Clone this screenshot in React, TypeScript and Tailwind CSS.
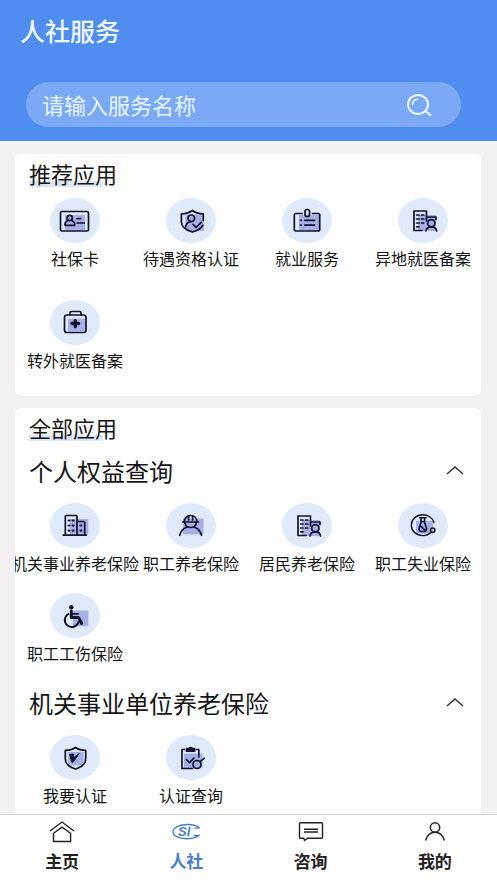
import { useState } from 'react'
import type { ReactNode } from 'react'

type Service = { label: string; icon: ReactNode }

/* Service icons: 50x45 badge with a lilac patch behind the line art */
function Badge({ patch, children }: { patch: number[]; children: ReactNode }) {
  const [x, y, width, height] = patch
  return (
    <svg
      viewBox="0 0 50 45"
      className="h-[45px] w-[50px] shrink-0"
      fill="none"
      stroke="#10132a"
      strokeWidth={1.7}
      strokeLinecap="round"
      strokeLinejoin="round"
      aria-hidden="true"
    >
      <ellipse cx="25" cy="22.5" rx="25" ry="22.5" fill="#dfeafb" stroke="none" />
      <rect x={x} y={y} width={width} height={height} fill="#a5afe8" stroke="none" />
      {children}
    </svg>
  )
}

function CardIcon() {
  return (
    <Badge patch={[15, 17, 20, 15]}>
      <rect x="10.5" y="13.5" width="28" height="19.5" rx="1.5" />
      <circle cx="19.7" cy="20" r="2.6" />
      <path d="M17.8 22.3 15 25v2.3h9.6V25l-2.8-2.7M27 20.7h3.6M27 25h7.4" />
    </Badge>
  )
}

function ShieldUserIcon() {
  return (
    <Badge patch={[19.5, 16.5, 18.5, 16.5]}>
      <path d="M37.3 22.5v-6.6c-4.8-.1-8.4-1.4-10.9-3.4-2.5 2-6.2 3.3-11 3.4V24c0 4.8 4.2 8 11 10 5.2-1.5 8.8-3.7 10.3-6.7" />
      <circle cx="25.3" cy="20.3" r="3.3" />
      <path d="M19.6 28.8c.6-3 2.3-4.7 4.7-5.1M27 26.3l3.2 3 5-5" />
    </Badge>
  )
}

function WorkBadgeIcon() {
  return (
    <Badge patch={[17, 17, 20, 16]}>
      <path d="M20 15.5h-6.2a1.5 1.5 0 0 0-1.5 1.5v14.5a1.5 1.5 0 0 0 1.5 1.5h22.4a1.5 1.5 0 0 0 1.5-1.5V17a1.5 1.5 0 0 0-1.5-1.5H30.5" />
      <rect x="23" y="11.5" width="4.5" height="7" rx="2" />
      <path d="M18.5 22.3h.8M22.8 22.3h9.7M18.5 27.2h.8M22.8 27.2h9.7" />
    </Badge>
  )
}

function OfficeUserIcon() {
  return (
    <Badge patch={[20, 17, 18, 16]}>
      <path d="M24 32.5h-8V13h12.5v10M28.5 19h9.5v2.5" />
      <path d="M18.7 17h2.3M23.5 17h2.3M18.7 21h2.3M23.5 21h2.3M18.7 25h2.3M23.5 25h2.3M18.7 28.8h2.3" />
      <circle cx="33.3" cy="25.2" r="3.6" />
      <path d="M28 33c.4-2.9 2.5-4.2 5.3-4.2s4.9 1.3 5.3 4.2" />
    </Badge>
  )
}

function MedkitIcon() {
  return (
    <Badge patch={[18, 18.7, 17, 12.5]}>
      <rect x="14.5" y="15" width="21.5" height="17.5" rx="2.5" />
      <path d="M20 15v-2a1.5 1.5 0 0 1 1.5-1.5h8A1.5 1.5 0 0 1 31 13v2" />
      <path d="M25.3 20.3v6.4M22 23.5h6.6" strokeWidth="3.3" />
    </Badge>
  )
}

function BuildingIcon() {
  return (
    <Badge patch={[20, 16, 18.3, 15.5]}>
      <path d="M13.3 32.2h23M15.3 32V13.5a1 1 0 0 1 1-1H26a1 1 0 0 1 1 1V32M27 18.5h6.7a1 1 0 0 1 1 1V32" />
      <path d="M18.6 17.5h.8M22.7 17.5h.8M18.6 22.5h.8M22.7 22.5h.8M18.6 27.6h.8M22.7 27.6h.8M30.5 22.5h.8M30.5 27.6h.8" strokeWidth="2.2" />
    </Badge>
  )
}

function WorkerIcon() {
  return (
    <Badge patch={[17, 15.7, 20.5, 15.7]}>
      <path d="M16.6 19h16M18.3 18.8c0-3.500 2.500-6.300 6.300-6.300s6.300 2.800 6.300 6.300M22.600 12.700V17M26.600 12.700V17" />
      <path d="M18.8 19.3c.4 3.4 2.7 5.2 5.8 5.2s5.4-1.8 5.8-5.2" />
      <path d="M13.7 32.3c1-4 3.3-6.6 6.5-7.8M35.5 32.3c-1-4-3.300-6.600-6.500-7.800" />
    </Badge>
  )
}

function FlaskIcon() {
  return (
    <Badge patch={[18, 18, 17, 12.5]}>
      <path d="M36 19.5c-1.2-4.3-5.6-7.7-11.3-7.7-6.3 0-11.4 4.6-11.4 10.4s5.1 10.4 11.4 10.4c4 0 6.6-1.5 8.3-3.6" strokeWidth="1.4" />
      <circle cx="34.7" cy="27.2" r="2.2" strokeWidth="1.5" />
      <path d="M21.5 14.7h6.6M23 15v4.5l-1.600 4.700a3.700 3.700 0 0 0 1 4.300h4.800a3.700 3.700 0 0 0 1-4.300l-1.600-4.700V15M23.300 18.500h3M22.300 22.800l4.700 4.400" strokeWidth="1.6" />
    </Badge>
  )
}

function WheelchairIcon() {
  return (
    <Badge patch={[23, 17.5, 15.3, 15.7]}>
      <circle cx="21.3" cy="14.2" r="2.2" fill="#10132a" stroke="none" />
      <path d="M21.3 18v6.5h7.2l3.2 6" strokeWidth="3" />
      <path d="M22 20.8h6" strokeWidth="1.8" />
      <path d="M18.3 21a7 7 0 1 0 10.3 8" strokeWidth="2" />
    </Badge>
  )
}

function ShieldCheckIcon() {
  return (
    <Badge patch={[18, 17, 15.5, 13.5]}>
      <path d="M25.5 12.5c-2.3 1.7-5.7 2.7-10.2 2.8v8.5c0 4.7 3.7 8.2 10.2 10.2 6.5-2 10.2-5.5 10.2-10.2v-8.5c-4.5-.1-7.9-1.1-10.2-2.8Z" />
      <path d="m20.2 19.3 3.3-.3.4 3.8 5.3-4.3-6.2 8.8-1.2-.3Z" fill="#10132a" strokeWidth="1" />
    </Badge>
  )
}

function ClipboardIcon() {
  return (
    <Badge patch={[18, 18.5, 18.5, 14.5]}>
      <path d="M18.3 14.5H16v19h10.5M30.5 14.5h2.3V22" />
      <path d="M20.5 16.2v-2.5h2.4c.3-1.6 3-1.6 3.3 0h2.4v2.5Z" fill="#10132a" />
      <path d="m20.5 24.7 3 3 4.5-4.7M34.2 26.600l4-3.400" />
      <circle cx="31" cy="29.5" r="4" />
    </Badge>
  )
}

const recommended: Service[] = [
  { label: '社保卡', icon: <CardIcon /> },
  { label: '待遇资格认证', icon: <ShieldUserIcon /> },
  { label: '就业服务', icon: <WorkBadgeIcon /> },
  { label: '异地就医备案', icon: <OfficeUserIcon /> },
  { label: '转外就医备案', icon: <MedkitIcon /> },
]

const personal: Service[] = [
  { label: '机关事业养老保险', icon: <BuildingIcon /> },
  { label: '职工养老保险', icon: <WorkerIcon /> },
  { label: '居民养老保险', icon: <OfficeUserIcon /> },
  { label: '职工失业保险', icon: <FlaskIcon /> },
  { label: '职工工伤保险', icon: <WheelchairIcon /> },
]

const institution: Service[] = [
  { label: '我要认证', icon: <ShieldCheckIcon /> },
  { label: '认证查询', icon: <ClipboardIcon /> },
]

function ServiceItem({ label, icon }: Service) {
  return (
    <a href="#" className="flex min-w-0 flex-col items-center gap-[3px]">
      {icon}
      <span className="text-base leading-6 whitespace-nowrap">{label}</span>
    </a>
  )
}

function SectionTitle({ children }: { children: string }) {
  return (
    <h2 className="relative isolate ml-3.5 w-fit text-[22px] leading-8">
      <span className="absolute bottom-0.5 left-0 -z-10 h-1.5 w-[74px] bg-[#dce6f8]" />
      {children}
    </h2>
  )
}

function Group({ title, services }: { title: string; services: Service[] }) {
  const [open, setOpen] = useState(true)
  return (
    <section>
      <h3>
        <button
          type="button"
          aria-expanded={open}
          onClick={() => setOpen(!open)}
          className="flex w-full items-center justify-between pr-4 pl-3.5 text-2xl leading-9"
        >
          {title}
          <svg
            viewBox="0 0 20 12"
            className={open ? 'h-3 w-5' : 'h-3 w-5 rotate-180'}
            fill="none"
            stroke="#333"
            strokeWidth={1.5}
            aria-hidden="true"
          >
            <path d="m2 9 8-7 8 7" />
          </svg>
        </button>
      </h3>
      {open && (
        <div className="mt-3.5 grid grid-cols-4 gap-y-[18px] pl-0.5">
          {services.map((service) => (
            <ServiceItem key={service.label} {...service} />
          ))}
        </div>
      )}
    </section>
  )
}

const tabs = [
  {
    label: '主页',
    icon: (
      <svg viewBox="0 0 26 22" className="h-[22px] w-[26px]" fill="none" stroke="currentColor" strokeWidth={1.4} aria-hidden="true">
        <path d="M1 10 13 1l12 9" />
        <path d="M4.5 20.5v-8.2L13 6.100l8.600 6.200v8.200Z" />
      </svg>
    ),
  },
  {
    label: '人社',
    active: true,
    icon: (
      <svg viewBox="0 0 28 22" className="h-[22px] w-7" fill="none" stroke="currentColor" strokeWidth={1.4} aria-hidden="true">
        <path d="M27.5 7C25.5 4.9 21 3.500 15.500 3.500 7.500 3.500 1 6.600 1 10.700s5.500 7 13 7c5.500 0 10.500-1 13-3.200h-5" />
        <text x="6" y="15" fontSize="13" fontWeight="700" fontStyle="italic" fontFamily="Liberation Sans, sans-serif" fill="currentColor" stroke="none">
          SI
        </text>
        <path d="M27.500 7h-5" />
      </svg>
    ),
  },
  {
    label: '咨询',
    icon: (
      <svg viewBox="0 0 26 22" className="h-[22px] w-[26px]" fill="none" stroke="currentColor" strokeWidth={1.4} strokeLinejoin="round" aria-hidden="true">
        <path d="M2.5 1.7h21a1 1 0 0 1 1 1v13.5a1 1 0 0 1-1 1H10l-3.5 2.3-.7-2.300H2.500a1 1 0 0 1-1-1V2.700a1 1 0 0 1 1-1Z" />
        <path d="M6 8.3h14M6 11h14" />
      </svg>
    ),
  },
  {
    label: '我的',
    icon: (
      <svg viewBox="0 0 26 22" className="h-[22px] w-[26px]" fill="none" stroke="currentColor" strokeWidth={1.5} aria-hidden="true">
        <circle cx="13" cy="6.5" r="4.7" />
        <path d="M3.5 19.5C5 14.5 8.5 11.2 13 11.2s8 3.3 9.5 8.3" />
      </svg>
    ),
  },
]

export default function App() {
  return (
    <div className="flex h-dvh flex-col bg-[#f2f0f1] font-['Noto_Sans_CJK_SC',sans-serif] text-[#151515]">
      {/* Header with search */}
      <header className="shrink-0 bg-[#4f8def] pt-2.5 pb-3.5">
        <h1 className="px-5 text-[25px] leading-10 font-medium text-[#f0f8ff]">人社服务</h1>
        <form
          role="search"
          onSubmit={(e) => e.preventDefault()}
          className="mt-8 mr-9 ml-[26px] flex h-[45px] items-center rounded-full bg-[#7ca9f6] pr-7 pl-4"
        >
          <input
            type="search"
            aria-label="请输入服务名称"
            placeholder="请输入服务名称"
            className="min-w-0 flex-1 bg-transparent pb-0.5 text-[22px] leading-8 text-white outline-none placeholder:text-[#e6f6ff]"
          />
          <button type="submit" aria-label="搜索">
            <svg viewBox="0 0 28 26" className="h-[26px] w-7" fill="none" stroke="#eef8ff" strokeWidth={2} strokeLinecap="round" aria-hidden="true">
              <ellipse cx="13" cy="12.5" rx="10" ry="9.5" />
              <path d="m20.5 19 5 4.2" />
              <path d="M7.5 12.5c0-3 2-5 5-5.2" strokeWidth="1.6" />
            </svg>
          </button>
        </form>
      </header>

      <main className="flex min-h-0 flex-1 flex-col gap-3 overflow-y-auto pt-[13px] pr-4 pl-[15px] [scrollbar-width:none]">
        {/* Recommended */}
        <section className="shrink-0 rounded-md bg-[#fefefe] pt-[3px] pb-6">
          <SectionTitle>推荐应用</SectionTitle>
          <div className="mt-[9px] grid grid-cols-4 gap-y-[30px] pl-0.5">
            {recommended.map((service) => (
              <ServiceItem key={service.label} {...service} />
            ))}
          </div>
        </section>

        {/* All services */}
        <section className="flex shrink-0 grow flex-col gap-5 overflow-hidden rounded-t-md bg-[#fefefe] pt-[3px]">
          <div className="flex flex-col gap-2.5">
            <SectionTitle>全部应用</SectionTitle>
            <Group title="个人权益查询" services={personal} />
          </div>
          <Group title="机关事业单位养老保险" services={institution} />
        </section>
      </main>

      {/* Tab bar */}
      <nav className="shrink-0 border-t border-[#d6d4d5] bg-[#fefefe] pt-1.5 pb-2.5">
        <ul className="grid grid-cols-4">
          {tabs.map((tab) => (
            <li key={tab.label}>
              <a
                href="#"
                aria-current={tab.active ? 'page' : undefined}
                className={
                  tab.active
                    ? 'flex flex-col items-center gap-1.5 text-[#4a7fc6]'
                    : 'flex flex-col items-center gap-1.5 text-[#222]'
                }
              >
                {tab.icon}
                <span className="text-[17px] leading-6 font-bold">{tab.label}</span>
              </a>
            </li>
          ))}
        </ul>
      </nav>
    </div>
  )
}
